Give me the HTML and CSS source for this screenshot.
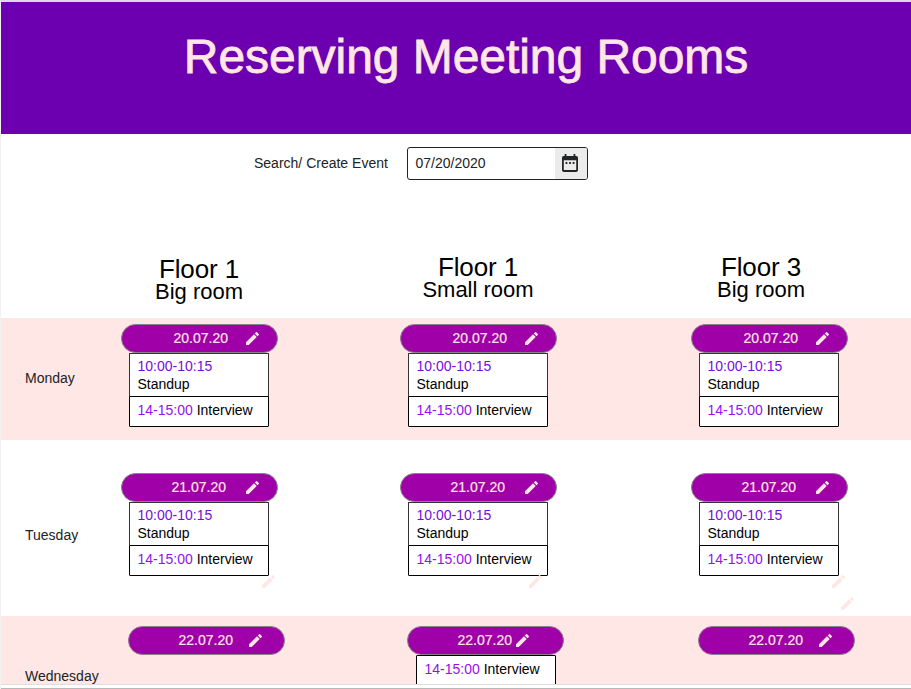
FILE: index.html
```html
<!DOCTYPE html>
<html lang="en">
<head>
<meta charset="utf-8">
<title>Reserving Meeting Rooms</title>
<link rel="stylesheet" href="styles.css">
</head>
<body>
<svg class="defs" width="0" height="0" aria-hidden="true">
  <symbol id="pencil" viewBox="3 3 18 18"><path d="M3 17.25V21h3.75L17.81 9.94l-3.75-3.75L3 17.25zM20.71 7.04a1 1 0 0 0 0-1.41l-2.34-2.34a1 1 0 0 0-1.41 0l-1.83 1.83 3.75 3.75 1.83-1.83z"/></symbol>
</svg>
<div class="page">
  <header class="header"><h1>Reserving Meeting Rooms</h1></header>
  <div class="search">
    <label for="date">Search/ Create Event</label>
    <div class="picker">
      <span class="picker-value" id="date">07/20/2020</span>
      <span class="picker-button">
        <svg viewBox="3 2 18 20" width="16" height="18"><path d="M9 11H7v2h2v-2zm4 0h-2v2h2v-2zm4 0h-2v2h2v-2zm2-7h-1V2h-2v2H8V2H6v2H5c-1.11 0-2 .9-2 2v14c0 1.1.89 2 2 2h14c1.1 0 2-.9 2-2V6c0-1.1-.9-2-2-2zm0 16H5V9h14v11z"/></svg>
      </span>
    </div>
  </div>
  <div class="row rooms">
    <div></div>
    <div class="room first"><h2>Floor 1</h2><p>Big room</p></div>
    <div class="room"><h2>Floor 1</h2><p>Small room</p></div>
    <div class="room"><h2>Floor 3</h2><p>Big room</p></div>
  </div>
  <div class="row monday tinted">
    <div class="day">Monday</div>
    <div class="slot">
      <div class="pill">20.07.20<svg class="edit"><use href="#pencil"/></svg></div>
      <div class="event tall"><span class="time early">10:00-10:15</span><br>Standup</div>
      <div class="event"><span class="time">14-15:00</span> Interview</div>
    </div>
    <div class="slot">
      <div class="pill">20.07.20<svg class="edit"><use href="#pencil"/></svg></div>
      <div class="event tall"><span class="time early">10:00-10:15</span><br>Standup</div>
      <div class="event"><span class="time">14-15:00</span> Interview</div>
    </div>
    <div class="slot">
      <div class="pill">20.07.20<svg class="edit"><use href="#pencil"/></svg></div>
      <div class="event tall"><span class="time early">10:00-10:15</span><br>Standup</div>
      <div class="event"><span class="time">14-15:00</span> Interview</div>
    </div>
  </div>
  <div class="row tuesday">
    <div class="day">Tuesday</div>
    <div class="slot">
      <div class="pill wide">21.07.20<svg class="edit"><use href="#pencil"/></svg></div>
      <div class="event tall"><span class="time early">10:00-10:15</span><br>Standup</div>
      <div class="event"><span class="time">14-15:00</span> Interview</div>
      <svg class="loose loose-a"><use href="#pencil"/></svg>
    </div>
    <div class="slot">
      <div class="pill wide">21.07.20<svg class="edit"><use href="#pencil"/></svg></div>
      <div class="event tall"><span class="time early">10:00-10:15</span><br>Standup</div>
      <div class="event"><span class="time">14-15:00</span> Interview</div>
      <svg class="loose loose-b"><use href="#pencil"/></svg>
    </div>
    <div class="slot">
      <div class="pill wide">21.07.20<svg class="edit"><use href="#pencil"/></svg></div>
      <div class="event tall"><span class="time early">10:00-10:15</span><br>Standup</div>
      <div class="event"><span class="time">14-15:00</span> Interview</div>
      <svg class="loose loose-a"><use href="#pencil"/></svg>
      <svg class="loose loose-c"><use href="#pencil"/></svg>
    </div>
  </div>
  <div class="row wednesday tinted">
    <div class="day">Wednesday</div>
    <div class="slot">
      <div class="pill">22.07.20<svg class="edit"><use href="#pencil"/></svg></div>
    </div>
    <div class="slot">
      <div class="pill tight">22.07.20<svg class="edit"><use href="#pencil"/></svg></div>
      <div class="event"><span class="time">14-15:00</span> Interview</div>
    </div>
    <div class="slot">
      <div class="pill">22.07.20<svg class="edit"><use href="#pencil"/></svg></div>
    </div>
  </div>
  <footer class="edge"></footer>
</div>
</body>
</html>
```

FILE: styles.css
```css
* { box-sizing: border-box; }
body {
  margin: 0;
  font: 14px/18px "Liberation Sans", Arial, sans-serif;
  color: #000;
  background: #fff;
  overflow: hidden;
}
.defs { position: absolute; }
.page {
  height: 689px;
  display: flex;
  flex-direction: column;
  border-top: 2px solid #dcdae8;
  border-left: 1px solid #f1f1f1;
  overflow: hidden;
}
.header {
  height: 132px;
  flex: none;
  padding: 27px 0 0 20px;
  background: #6c00b1;
  text-align: center;
}
h1 {
  margin: 0;
  font-size: 48px;
  line-height: 55px;
  font-weight: 400;
  letter-spacing: -0.05px;
  color: #ffe7e5;
  -webkit-text-stroke: 0.8px #ffe7e5;
}
.search {
  height: 113px;
  flex: none;
  display: flex;
  align-items: flex-start;
  padding: 13px 0 0 253px;
  color: #212325;
}
.search label { width: 153px; padding-top: 7px; }
.picker {
  width: 181px;
  height: 33px;
  display: flex;
  border: 1px solid #212325;
  border-radius: 3px;
  overflow: hidden;
}
.picker-value { flex: 1; padding: 6px 0 0 7.5px; }
.picker-button {
  width: 32px;
  padding: 6px 0 0 7px;
  background: #ebebeb;
}
.picker-button svg { display: block; fill: #212325; }
.row {
  display: grid;
  grid-template-columns: 120px 279px 291px 1fr;
  flex: none;
}
.rooms { height: 71px; grid-template-columns: 120px 279px 283px 1fr; }
.room { width: 156px; padding-top: 6px; text-align: center; }
.room.first { padding-top: 8px; }
.room h2 { margin: 0; font-size: 26px; line-height: 28px; font-weight: 400; letter-spacing: -0.1px; }
.room p { margin: 0; font-size: 22px; line-height: 18px; }
.tinted { background: #ffe7e5; }
.monday { height: 122px; padding-top: 6px; }
.tuesday { height: 176px; padding-top: 33px; }
.wednesday {
  height: 68px;
  padding-top: 10px;
  grid-template-columns: 127px 279px 291px 1fr;
  overflow: hidden;
}
.day { padding: 45px 0 0 24px; color: #212325; }
.tuesday .day { padding-top: 53px; }
.wednesday .day { padding-top: 41px; }
.slot { width: 157px; position: relative; }
.pill {
  height: 29px;
  display: flex;
  justify-content: flex-end;
  align-items: center;
  gap: 18px;
  padding: 0 18px 1px 0;
  border: 1px solid #858585;
  border-radius: 15px;
  background: #9f00a7;
  color: #ffe7e5;
  -webkit-text-stroke: 0.2px #ffe7e5;
}
.pill.wide { gap: 20px; }
.wednesday .pill { gap: 16px; padding-right: 22px; }
.wednesday .pill.tight { gap: 4px; padding-right: 34px; }
.edit { width: 13px; height: 13px; margin-top: 1px; flex: none; fill: #ffe7e5; }
.event {
  width: 140px;
  height: 31px;
  margin: -1px 0 0 8px;
  padding: 4px 0 0 7.5px;
  border: 1px solid #000;
  border-radius: 1px;
  background: #fff;
  white-space: nowrap;
}
.event.tall { height: 44px; margin-top: 0; padding-top: 3px; border-color: #333; border-bottom-color: #000; }
.wednesday .event { margin: 0 0 0 9px; }
.time { color: #9610ee; }
.time.early { color: #780be0; }
.loose { position: absolute; width: 13px; height: 13px; fill: #ffe7e5; }
.loose-a { left: 141px; top: 102px; }
.loose-b { left: 129px; top: 102px; }
.loose-c { left: 150px; top: 124px; }
.edge {
  height: 5px;
  flex: none;
  border-top: 1px solid #dedede;
  border-bottom: 1px solid #b8b8b8;
}
```
